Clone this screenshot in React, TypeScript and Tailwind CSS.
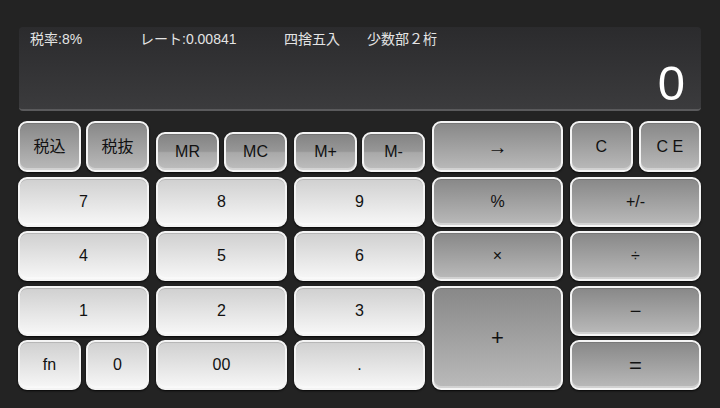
import React from "react";

type Kind = "light" | "dark" | "mem";

const base =
  "flex items-center justify-center rounded-[9px] border-2 border-[#f4f4f4] text-[16px] text-[#111] shadow-[0_1px_2px_rgba(0,0,0,0.8),inset_0_-2px_0_rgba(255,255,255,0.35),inset_0_1px_0_rgba(0,0,0,0.12)]";

const kinds: Record<Kind, string> = {
  light: "bg-linear-to-b from-[#d0d0d0] to-[#f7f7f7]",
  dark: "bg-linear-to-b from-[#888888] to-[#bababa]",
  mem: "bg-[linear-gradient(to_bottom,#838383_0%,#979797_48%,#a9a9a9_52%,#bebebe_100%)]",
};

function Key({
  label,
  kind = "light",
  className = "",
}: {
  label: string;
  kind?: Kind;
  className?: string;
}) {
  return <div className={`${base} ${kinds[kind]} ${className}`}>{label}</div>;
}

export default function App() {
  return (
    <div
      className="w-[720px] h-[408px] bg-[#232323] flex flex-col pt-[27px] pl-[18px] pr-[19px] overflow-hidden"
      style={{ fontFamily: '"Liberation Sans", "Noto Sans CJK JP", sans-serif' }}
    >
      <div className="ml-px h-[84px] rounded-[4px] bg-linear-to-b from-[#2b2b2d] to-[#3b3b3d] border-b-2 border-[#5a5a5c] flex flex-col px-[11px] pt-[2px]">
        <div className="flex text-[14px] text-[#e4e4e4] h-[20px] items-center">
          <span className="w-[110px]">税率:8%</span>
          <span className="w-[144px]">レート:0.00841</span>
          <span className="w-[83px]">四捨五入</span>
          <span>少数部２桁</span>
        </div>
        <div className="flex-1 flex items-start justify-end pr-[5px] text-white text-[49px] leading-none pt-[10px]">
          0
        </div>
      </div>

      <div className="mt-[10px] grid grid-cols-[131px_131px_131px_131px_131px] grid-rows-[51px_50px_50px_50px_50px] gap-x-[7px] gap-y-[4.5px]">
        <div className="flex gap-[5px]">
          <Key label="税込" kind="dark" className="flex-1" />
          <Key label="税抜" kind="dark" className="flex-1" />
        </div>
        <div className="flex gap-[5px] pt-[11px]">
          <Key label="MR" kind="mem" className="flex-1" />
          <Key label="MC" kind="mem" className="flex-1" />
        </div>
        <div className="flex gap-[5px] pt-[11px]">
          <Key label="M+" kind="mem" className="flex-1" />
          <Key label="M-" kind="mem" className="flex-1" />
        </div>
        <Key label="→" kind="dark" className="text-[20px]" />
        <div className="flex gap-[6px]">
          <Key label="C" kind="dark" className="flex-1" />
          <Key label="C E" kind="dark" className="flex-1" />
        </div>

        <Key label="7" />
        <Key label="8" />
        <Key label="9" />
        <Key label="%" kind="dark" />
        <Key label="+/-" kind="dark" />

        <Key label="4" />
        <Key label="5" />
        <Key label="6" />
        <Key label="×" kind="dark" />
        <Key label="÷" kind="dark" />

        <Key label="1" />
        <Key label="2" />
        <Key label="3" />
        <Key label="+" kind="dark" className="row-span-2 text-[22px]" />
        <Key label="−" kind="dark" className="text-[20px]" />

        <div className="flex gap-[5px]">
          <Key label="fn" className="flex-1" />
          <Key label="0" className="flex-1" />
        </div>
        <Key label="00" />
        <Key label="." />
        <Key label="=" kind="dark" className="text-[22px]" />
      </div>
    </div>
  );
}
